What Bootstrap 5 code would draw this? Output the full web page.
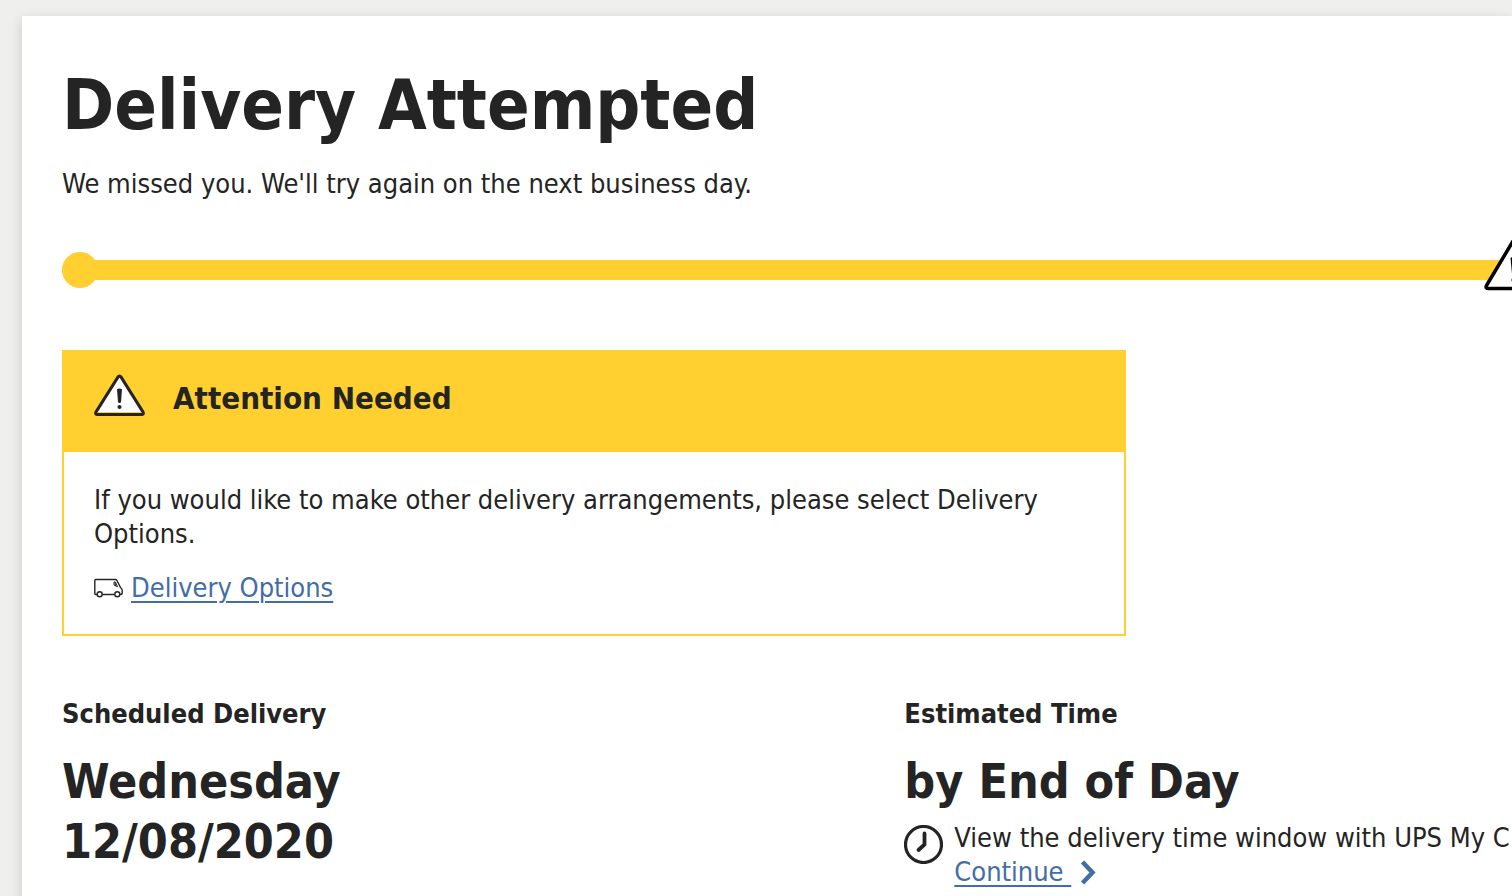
<!DOCTYPE html>
<html lang="en">
<head>
<meta charset="utf-8">
<meta name="viewport" content="width=device-width, initial-scale=1">
<title>Delivery Attempted</title>
<link href="https://cdn.jsdelivr.net/npm/bootstrap@5.3.0/dist/css/bootstrap.min.css" rel="stylesheet">
<style>
  :root { --gold: #ffd02f; --ink: #242424; --blue: #426da9; }
  body { background: #efefed; color: var(--ink); font-family: "DejaVu Sans Condensed", "DejaVu Sans", sans-serif; font-size: 27px; line-height: 34px; overflow-x: hidden; }
  h1, h2, h3 { font-weight: 700; margin: 0; }
  svg { display: block; flex: none; }
  a { color: var(--blue); text-decoration-thickness: 2px; text-underline-offset: 4px; }
  .tracking-panel { margin: 16px 0 0 22px; padding: 48px 6px 40px 40px; box-shadow: 0 4px 12px rgba(0, 0, 0, .16); }
  .page-title { font-size: 70px; line-height: 82px; margin-bottom: 21px; }
  .track { height: 20px; margin: 59px -6px 70px 0; background: var(--gold); border-radius: 10px 0 0 10px; }
  .track-start { width: 36px; height: 36px; left: 0; top: -8px; background: var(--gold); }
  .track-alert { right: -32px; top: -22px; }
  .notice { max-width: 1064px; border: 2px solid var(--gold); border-radius: 0; margin-bottom: 61px; }
  .notice-head { background: var(--gold); padding: 22px 30px 32px; gap: 28px; }
  .notice-head h2 { font-size: 31px; line-height: 44px; padding-top: 2px; }
  .notice-body { padding: 31px 30px 29px; }
  .label-text { font-size: 27px; line-height: 34px; margin-bottom: 20px; }
  .value-text { font-size: 48px; line-height: 60px; }
  .time-note { margin-top: 10px; gap: 11px; }
</style>
</head>
<body>
<main class="tracking-panel bg-white">
  <h1 class="page-title">Delivery Attempted</h1>
  <p class="m-0">We missed you. We'll try again on the next business day.</p>

  <div class="track position-relative">
    <span class="track-start position-absolute rounded-circle"></span>
    <svg class="track-alert position-absolute" width="60" height="54" viewBox="0 0 60 54" role="img" aria-label="Delivery alert">
      <path d="M28.500 4Q30 1.500 31.500 4L57.500 47.500Q59 50.500 55.500 50.500H4.500Q1 50.500 2.500 47.500Z" fill="#fff" stroke="#000" stroke-width="3.500" stroke-linejoin="round"/>
      <path d="M26.500 20Q30 18 33.500 20L32 36Q30 37.500 28 36Z"/><circle cx="30" cy="42" r="2.500"/>
    </svg>
  </div>

  <section class="notice card">
    <div class="notice-head d-flex align-items-start">
      <svg width="51" height="44" viewBox="0 0 51 44" aria-hidden="true">
        <path d="M24 3Q25.500 1 27 3L49 38Q50 40.500 47.500 40.500H3.500Q1 40.500 2 38Z" fill="#fff" stroke="#242424" stroke-width="3.200" stroke-linejoin="round"/>
        <path d="M4 38.500h43" stroke="#ffd02f"/>
        <path d="M23 15.200Q25.500 13.800 28 15.200L27 28.300Q25.500 29.500 24 28.300Z" fill="#242424"/>
        <circle cx="25.500" cy="33" r="2" fill="#242424"/>
      </svg>
      <h2>Attention Needed</h2>
    </div>
    <div class="notice-body">
      <p class="mb-0">If you would like to make other delivery arrangements, please select Delivery Options.</p>
      <div class="d-flex align-items-center gap-2 mt-3 pt-1">
        <svg width="29" height="20" viewBox="0 0 29 20" fill="none" stroke="#242424" stroke-width="1.400" aria-hidden="true">
          <path d="M3 16.500H1.800Q.8 16.500.8 15.500V3Q.8 1.500 1.800 1.500H21.500Q22.500 1.500 23 2.500L26.500 9.500Q28.200 10.800 28.200 12.500V15Q28.200 16.500 26 16.500M8.300 16.500h12.400"/>
          <circle cx="5.700" cy="16.200" r="2.500"/><circle cx="23.300" cy="16.200" r="2.500"/>
          <path d="M20 4V7L23.500 8.800 21.500 4ZM21 4 21.500 8" stroke-width="1"/>
        </svg>
        <a href="#">Delivery Options</a>
      </div>
    </div>
  </section>

  <div class="row gx-0">
    <section class="col-7">
      <h3 class="label-text">Scheduled Delivery</h3>
      <div class="value-text fw-bold">Wednesday<br>12/08/2020</div>
    </section>
    <section class="col-5">
      <h3 class="label-text">Estimated Time</h3>
      <div class="value-text fw-bold">by End of Day</div>
      <div class="time-note d-flex align-items-start">
        <svg class="mt-1" width="39" height="39" viewBox="0 0 39 39" fill="none" stroke="#242424" aria-hidden="true">
          <circle cx="19.500" cy="19.500" r="18" stroke-width="3.200"/>
          <path d="M20.500 8.500V19.500L14.500 25" stroke-width="3.800" stroke-linecap="round" stroke-linejoin="round"/>
        </svg>
        <div class="text-nowrap">
          <div>View the delivery time window with UPS My C</div>
          <a class="d-inline-flex align-items-center text-decoration-none" href="#"><span class="text-decoration-underline">Continue&nbsp;</span><svg class="ms-2" width="18" height="26" viewBox="0 0 18 26" fill="none" stroke="currentColor" stroke-width="4.500" aria-hidden="true"><path d="M3.500 3 13.500 13.500 3.500 24"/></svg></a>
        </div>
      </div>
    </section>
  </div>
</main>
<script src="https://cdn.jsdelivr.net/npm/bootstrap@5.3.0/dist/js/bootstrap.bundle.min.js"></script>
</body>
</html>
